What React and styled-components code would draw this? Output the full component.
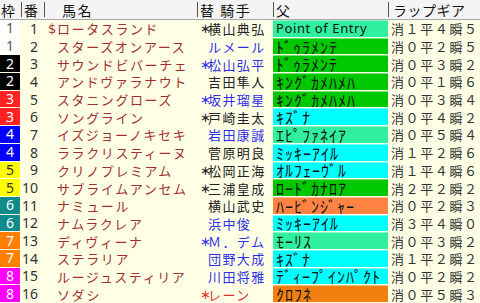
import React from "react";
import styled, { createGlobalStyle } from "styled-components";

const Global = createGlobalStyle`
  html, body { margin: 0; padding: 0; background: #ffffe6; }
  body { font-family: "Noto Sans CJK JP", "Noto Sans", sans-serif; line-height: 1; }
`;

const COLS = "21px 23px 153px 76px 115px 92px";

const Table = styled.div`
  width: 480px;
  height: 303px;
  display: grid;
  grid-template-rows: 20px 283px;
  background: #ffffe6;
  overflow: hidden;
`;

const Header = styled.div`
  display: grid;
  grid-template-columns: ${COLS};
  background: #f4f4f4;
  border-bottom: 1px solid #a8a8a8;
  box-sizing: border-box;
`;

const HeadCell = styled.div`
  position: relative;
  display: flex;
  align-items: center;
  padding-left: ${(p) => p.$pad || 2}px;
  font-size: 14px;
  letter-spacing: ${(p) => p.$ls ?? 1.5}px;
  color: #111;
  white-space: pre;
  &::before {
    content: "";
    display: ${(p) => (p.$sep ? "block" : "none")};
    position: absolute;
    left: 0;
    top: 2px;
    bottom: 2px;
    width: 1px;
    background: #555;
  }
`;

const Body = styled.div`
  display: grid;
  grid-template-rows: repeat(16, minmax(0, 1fr));
  min-height: 0;
`;

const Row = styled.div`
  display: grid;
  grid-template-columns: ${COLS};
  min-height: 0;
`;

const WAKU = {
  1: ["#ffffff", "#555"],
  2: ["#000000", "#fff"],
  3: ["#ff2222", "#fff"],
  4: ["#0000ff", "#fff"],
  5: ["#ffff00", "#333"],
  6: ["#108a8a", "#fff"],
  7: ["#ff8000", "#fff"],
  8: ["#ff00ff", "#fff"],
};

const Waku = styled.div`
  background: ${(p) => WAKU[p.$w][0]};
  color: ${(p) => WAKU[p.$w][1]};
  margin: 0 1px 1px 0;
  display: flex;
  align-items: center;
  justify-content: center;
  font-size: 14px;
  font-family: "Noto Sans", sans-serif;
`;

const Num = styled.div`
  display: flex;
  align-items: center;
  justify-content: flex-end;
  padding-right: 6px;
  font-size: 14px;
  color: #333;
  font-family: "Noto Sans", sans-serif;
`;

const Name = styled.div`
  display: flex;
  align-items: center;
  padding-left: 4px;
  font-size: 13px;
  letter-spacing: 1.6px;
  color: #a03030;
  white-space: pre;
  overflow: hidden;
`;

const Mark = styled.span`
  display: inline-block;
  width: ${(p) => p.$w}px;
  flex: none;
  letter-spacing: 0;
  font-family: "DejaVu Sans", sans-serif;
`;

const Jockey = styled.div`
  display: flex;
  align-items: center;
  padding-left: 3px;
  font-size: 13px;
  letter-spacing: 1.4px;
  color: ${(p) => p.$c};
  white-space: pre;
  overflow: hidden;
`;

const Sire = styled.div`
  background: ${(p) => p.$bg};
  margin-bottom: 1px;
  border-top: 1px solid rgba(255, 255, 255, 0.45);
  display: flex;
  align-items: center;
  padding-left: 3px;
  font-size: ${(p) => (p.$latin ? 13 : 16)}px;
  letter-spacing: ${(p) => (p.$latin ? 0.6 : 1)}px;
  color: #111;
  white-space: pre;
  overflow: hidden;
  font-family: ${(p) =>
    p.$latin ? '"Noto Sans", sans-serif' : '"Noto Sans CJK JP", sans-serif'};
`;

const Gear = styled.div`
  display: flex;
  align-items: center;
  padding-left: 3px;
  font-size: 13px;
  letter-spacing: 1.6px;
  color: #333;
  white-space: pre;
`;

const AQ = "#30f0a0";
const GR = "#00c800";
const CY = "#00ffff";

const BLACK = "#222";
const BLUE = "#2f2fe8";
const RED = "#e03030";

const data = [
  [1, 1, "$", "ロータスランド", "*", "横山典弘", BLACK, "Point of Entry", AQ, "消１平４瞬５"],
  [1, 2, "", "スターズオンアース", "", "ルメール", BLUE, "ﾄﾞｩﾗﾒﾝﾃ", GR, "消０平２瞬５"],
  [2, 3, "", "サウンドビバーチェ", "*", "松山弘平", BLUE, "ﾄﾞｩﾗﾒﾝﾃ", GR, "消０平３瞬２"],
  [2, 4, "", "アンドヴァラナウト", "", "吉田隼人", BLACK, "ｷﾝｸﾞｶﾒﾊﾒﾊ", GR, "消０平１瞬６"],
  [3, 5, "", "スタニングローズ", "*", "坂井瑠星", BLUE, "ｷﾝｸﾞｶﾒﾊﾒﾊ", GR, "消０平３瞬４"],
  [3, 6, "", "ソングライン", "*", "戸崎圭太", BLACK, "ｷｽﾞﾅ", CY, "消０平４瞬２"],
  [4, 7, "", "イズジョーノキセキ", "", "岩田康誠", BLUE, "ｴﾋﾟﾌｧﾈｲｱ", AQ, "消０平５瞬４"],
  [4, 8, "", "ララクリスティーヌ", "", "菅原明良", BLACK, "ﾐｯｷｰｱｲﾙ", CY, "消１平２瞬６"],
  [5, 9, "", "クリノプレミアム", "*", "松岡正海", BLACK, "ｵﾙﾌｪｰｳﾞﾙ", CY, "消１平４瞬６"],
  [5, 10, "", "サブライムアンセム", "*", "三浦皇成", BLACK, "ﾛｰﾄﾞｶﾅﾛｱ", GR, "消２平２瞬２"],
  [6, 11, "", "ナミュール", "", "横山武史", BLACK, "ﾊｰﾋﾞﾝｼﾞｬｰ", "#ff8444", "消０平２瞬３"],
  [6, 12, "", "ナムラクレア", "", "浜中俊", BLUE, "ﾐｯｷｰｱｲﾙ", CY, "消３平４瞬０"],
  [7, 13, "", "ディヴィーナ", "*", "Ｍ．デム", BLUE, "ﾓｰﾘｽ", AQ, "消０平３瞬２"],
  [7, 14, "", "ステラリア", "", "団野大成", BLUE, "ｷｽﾞﾅ", CY, "消１平２瞬２"],
  [8, 15, "", "ルージュスティリア", "", "川田将雅", BLUE, "ﾃﾞｨｰﾌﾟｲﾝﾊﾟｸﾄ", CY, "消０平２瞬２"],
  [8, 16, "", "ソダシ", "*", "レーン", RED, "ｸﾛﾌﾈ", "#f08010", "消０平５瞬３"],
];

export default function App() {
  return (
    <>
      <Global />
      <Table>
        <Header>
          <HeadCell $pad={1}>枠</HeadCell>
          <HeadCell $sep $pad={3}>番</HeadCell>
          <HeadCell $sep $pad={18}>馬名</HeadCell>
          <HeadCell $sep $pad={3}>替 騎手</HeadCell>
          <HeadCell $sep $pad={3}>父</HeadCell>
          <HeadCell $sep $pad={5} $ls={0.5}>ラップギア</HeadCell>
        </Header>
        <Body>
          {data.map((r) => (
            <Row key={r[1]}>
              <Waku $w={r[0]}>{r[0]}</Waku>
              <Num>{r[1]}</Num>
              <Name>
                <Mark $w={9}>{r[2]}</Mark>
                {r[3]}
              </Name>
              <Jockey $c={r[6]}>
                <Mark $w={8}>{r[4] ? "∗" : ""}</Mark>
                {r[5]}
              </Jockey>
              <Sire $bg={r[8]} $latin={r[7] === "Point of Entry"}>
                {r[7]}
              </Sire>
              <Gear>{r[9]}</Gear>
            </Row>
          ))}
        </Body>
      </Table>
    </>
  );
}
